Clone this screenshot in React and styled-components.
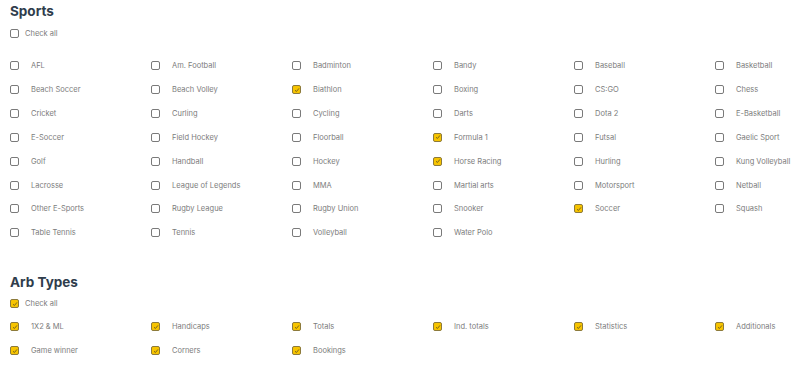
import React, { useState } from 'react';
import styled, { createGlobalStyle } from 'styled-components';

const GlobalStyle = createGlobalStyle`
    body {
        margin: 0;
        background: #ffffff;
        font-family: Inter, "Noto Sans", sans-serif;
    }
`;

const Page = styled.div`
    padding: 0 10px;
`;

const Section = styled.section`
    margin-top: ${(p) => p.$top || 0}px;
`;

const Title = styled.h2`
    margin: 0;
    height: 21px;
    line-height: 22px;
    font-size: 13.5px;
    font-weight: 700;
    color: #2f3d4c;
`;

const Grid = styled.div`
    display: grid;
    grid-template-columns: repeat(5, 141px) 1fr;
    grid-auto-rows: 23.85px;
    margin-top: ${(p) => p.$gap}px;
`;

const Item = styled.label`
    display: flex;
    align-items: center;
    height: ${(p) => (p.$single ? '24px' : 'auto')};
    cursor: pointer;
    user-select: none;
`;

const Box = styled.span`
    box-sizing: border-box;
    width: 9px;
    height: 9px;
    flex: none;
    border-radius: 2px;
    border: 1px solid ${(p) => (p.$checked ? '#8c7a3c' : '#7a7a7a')};
    background: ${(p) => (p.$checked ? '#f7c400' : '#ffffff')};
    display: flex;
    align-items: center;
    justify-content: center;
`;

const Text = styled.span`
    margin-left: ${(p) => p.$offset}px;
    font-size: 7.5px;
    color: #7c7c7c;
    white-space: nowrap;
`;

const Tick = () => (
    <svg width="6" height="6" viewBox="0 0 6 6">
        <path d="M1 3.2 L2.4 4.5 L5 1.4" fill="none" stroke="#5a4e1e" strokeWidth="0.8" />
    </svg>
);

const Check = ({ label, checked, offset, single, onToggle }) => (
    <Item $single={single} onClick={onToggle}>
        <Box $checked={checked}>{checked && <Tick />}</Box>
        <Text $offset={offset}>{label}</Text>
    </Item>
);

const SPORTS = [
    'AFL', 'Am. Football', 'Badminton', 'Bandy', 'Baseball', 'Basketball',
    'Beach Soccer', 'Beach Volley', 'Biathlon', 'Boxing', 'CS:GO', 'Chess',
    'Cricket', 'Curling', 'Cycling', 'Darts', 'Dota 2', 'E-Basketball',
    'E-Soccer', 'Field Hockey', 'Floorball', 'Formula 1', 'Futsal', 'Gaelic Sport',
    'Golf', 'Handball', 'Hockey', 'Horse Racing', 'Hurling', 'Kung Volleyball',
    'Lacrosse', 'League of Legends', 'MMA', 'Martial arts', 'Motorsport', 'Netball',
    'Other E-Sports', 'Rugby League', 'Rugby Union', 'Snooker', 'Soccer', 'Squash',
    'Table Tennis', 'Tennis', 'Volleyball', 'Water Polo',
];

const ARB_TYPES = [
    '1X2 & ML', 'Handicaps', 'Totals', 'Ind. totals', 'Statistics', 'Additionals',
    'Game winner', 'Corners', 'Bookings',
];

const CheckGroup = ({ title, items, initial, top, gap }) => {
    const [picked, setPicked] = useState(initial);
    const all = items.every((i) => picked.includes(i));
    const toggle = (name) =>
        setPicked((p) => (p.includes(name) ? p.filter((x) => x !== name) : [...p, name]));

    return (
        <Section $top={top}>
            <Title>{title}</Title>
            <Check
                single
                label="Check all"
                offset={6}
                checked={all}
                onToggle={() => setPicked(all ? [] : items)}
            />
            <Grid $gap={gap}>
                {items.map((name) => (
                    <Check
                        key={name}
                        label={name}
                        offset={12}
                        checked={picked.includes(name)}
                        onToggle={() => toggle(name)}
                    />
                ))}
            </Grid>
        </Section>
    );
};

const App = () => (
    <Page>
        <GlobalStyle />
        <CheckGroup
            title="Sports"
            items={SPORTS}
            initial={['Biathlon', 'Formula 1', 'Horse Racing', 'Soccer']}
            gap={9}
        />
        <CheckGroup title="Arb Types" items={ARB_TYPES} initial={ARB_TYPES} top={26} gap={-1} />
    </Page>
);

export default App;
